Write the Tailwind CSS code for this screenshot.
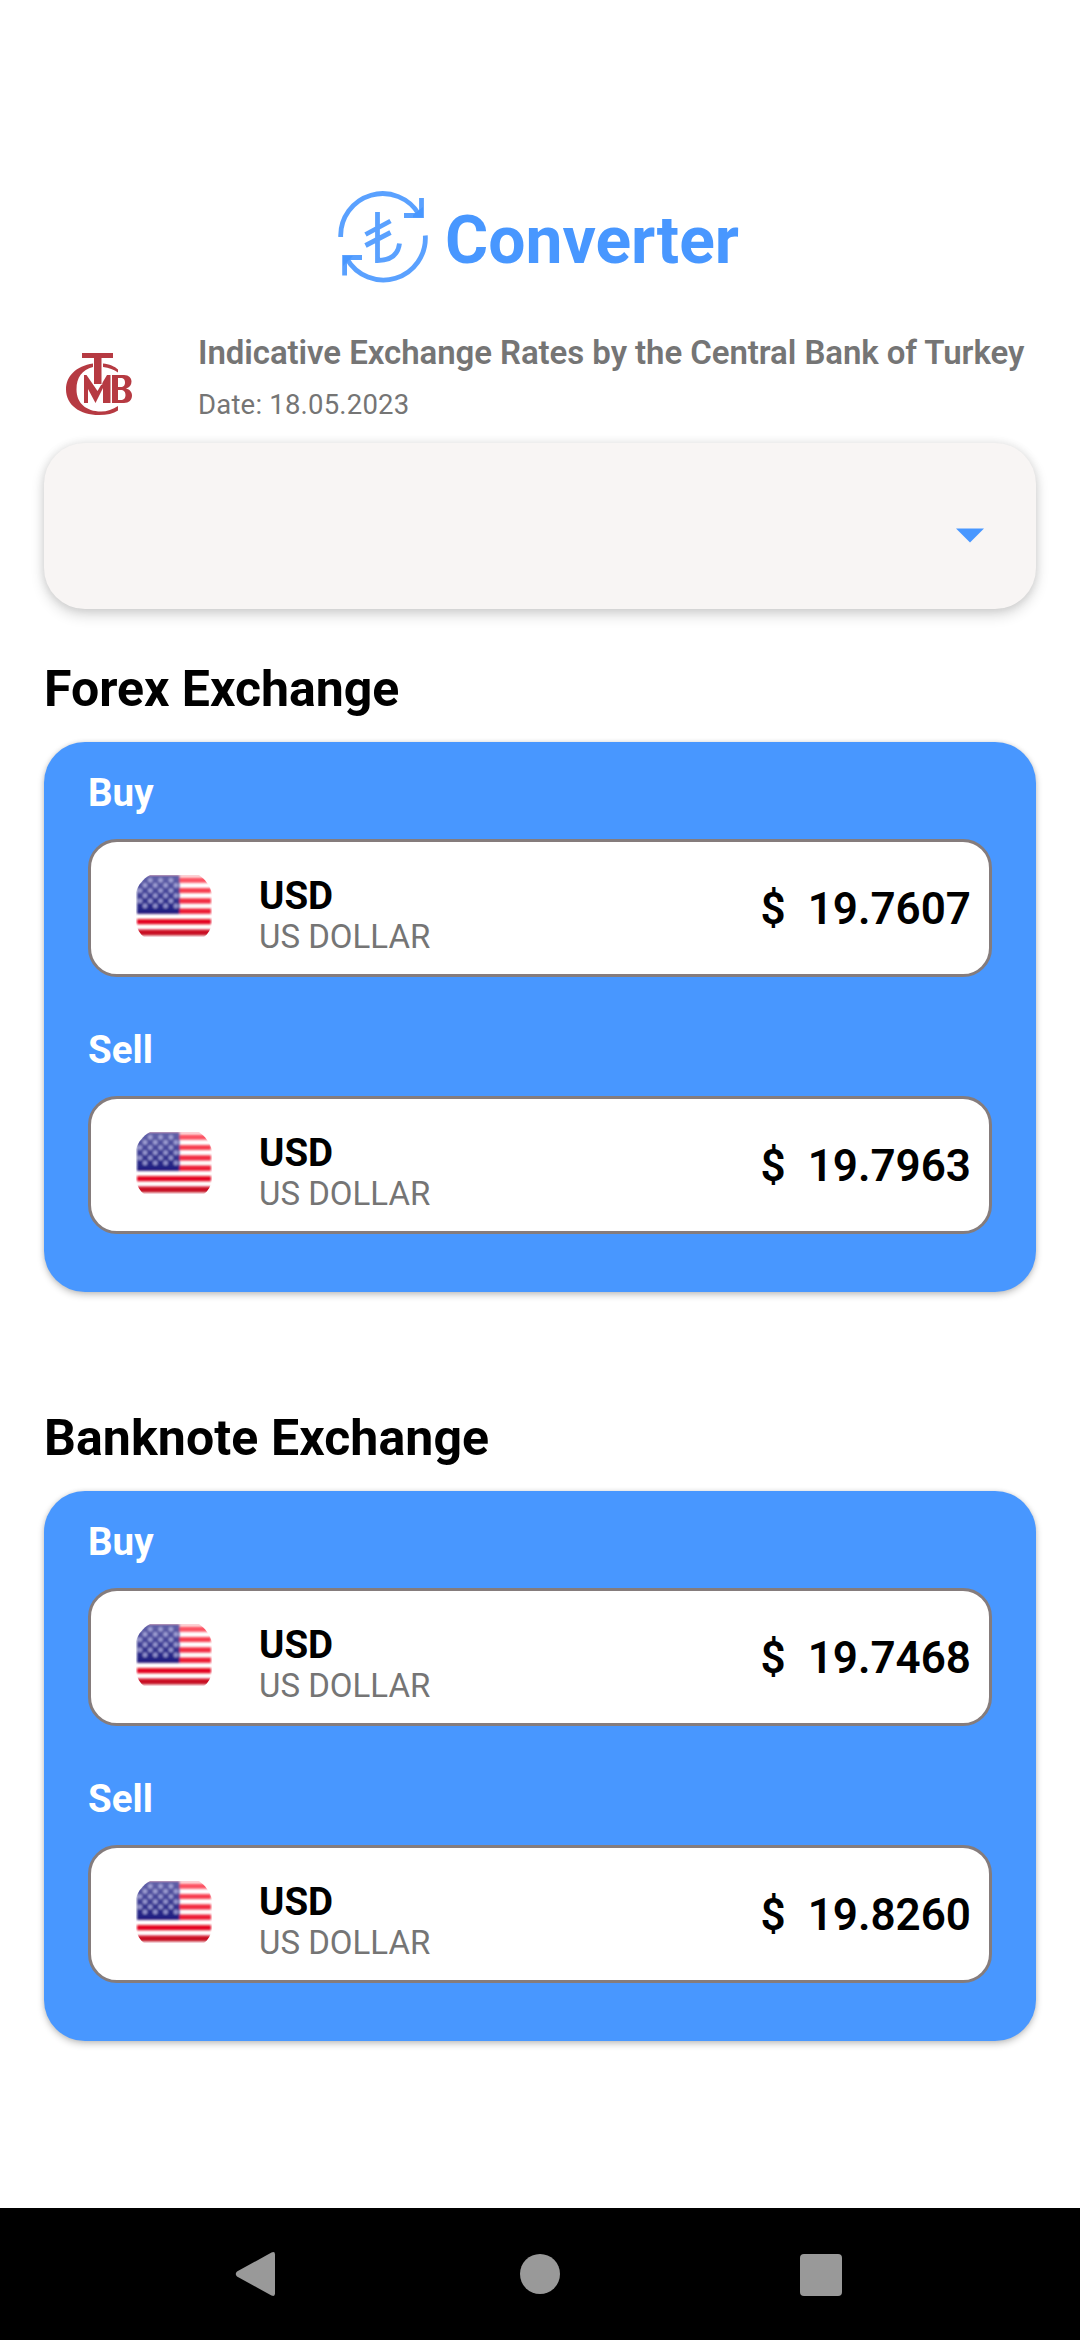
<!DOCTYPE html>
<html lang="en">
<head>
<meta charset="utf-8">
<title>Converter</title>
<script src="https://cdn.jsdelivr.net/npm/@tailwindcss/browser@4"></script>
</head>
<body class="flex h-[2340px] w-[1080px] flex-col overflow-hidden bg-white font-['Roboto',sans-serif] text-black">

<svg width="0" height="0" class="absolute">
  <defs>
    <linearGradient id="canton" x1="0" y1="0" x2="0" y2="1"><stop offset="0" stop-color="#6464aa"/><stop offset="1" stop-color="#1b1b80"/></linearGradient>
    <linearGradient id="stripes" gradientUnits="userSpaceOnUse" x1="0" y1="0" x2="0" y2="62"><stop offset="0" stop-color="#ff5a68"/><stop offset=".6" stop-color="#ec1730"/><stop offset=".8" stop-color="#e2001c"/><stop offset="1" stop-color="#bb1024"/></linearGradient>
    <filter id="soft" x="-5%" y="-5%" width="110%" height="110%"><feGaussianBlur stdDeviation="1.2"/></filter>
    <clipPath id="flagShape"><path d="M14 0H63C69 4 74 11 76 18V48C75 54 72 59 68 62H8C4 59 1 54 0 48V17C2 10 7 4 14 0Z"/></clipPath>
    <symbol id="flag" viewBox="0 0 76 62">
      <g clip-path="url(#flagShape)">
        <rect width="76" height="62" fill="#fff"/>
        <g filter="url(#soft)">
          <path fill="url(#stripes)" d="M1 2.600H75V7.800H1ZM1 13H75V18H1ZM1 23.300H75V28.500H1ZM1 33.600H75V38.800H1ZM1 44H75V49.200H1ZM1 54.600H75V60.500H1Z"/>
          <path fill="#f9b9bf" d="M1 -1H75V1H1Z"/>
          <rect x="1" y="0" width="42.500" height="38.800" fill="url(#canton)"/>
          <g fill="none" stroke="#c8c8ee" stroke-opacity=".66" stroke-width="4.800" stroke-linecap="round" stroke-dasharray="0 10.300">
            <path d="M4 5.300H43M4 15.600H43M4 25.900H43"/>
            <path d="M9 10.400H43M9 20.700H43M9 31H43"/>
          </g>
        </g>
      </g>
    </symbol>
  </defs>
</svg>

<header class="flex items-start pt-[190px] pl-[336px]">
  <svg class="h-[94px] w-[94px]" viewBox="0 0 94 94" fill="none" stroke="#4897ff" stroke-opacity=".9" stroke-width="4.800">
    <path d="M4.700 47A42 42 0 0 1 83 24.500"/><path d="M68 25.500H85.500V8"/>
    <path d="M89.300 45.500A42 42 0 0 1 11 69"/><path d="M26 67.500H8.600V85.500"/>
    <path d="M41.500 22V70.500C54 70.500 62 65 63.500 53.500M29.500 44.500 54.500 31M29.500 55.500 54.500 42.500"/>
    <path fill="#4897ff" stroke="none" d="M77 25 87 17V27.500H77ZM7 76V66H17Z"/>
  </svg>
  <h1 class="mt-3 ml-[15px] text-[66px] leading-[78px] font-bold text-[#4897ff]">Converter</h1>
</header>

<section class="mt-[49px] flex h-[110px] items-start pl-[66px]">
  <svg class="mt-5 h-[63px] w-[67px]" viewBox="0 0 67 63" fill="#b63a42">
    <path d="M27 10.500C10 13 0 23 0 36.500 0 52 14 62 33 62 41 62 47.500 60.500 52 57.500V53C47 56.500 41 58.500 35 58.500 20 58.500 10.500 50 10.500 36.500 10.500 24 16 17 27 14ZM37 10.500C43 11 49 13.500 52 16.500V19.500C48 16.500 43 15 37 14Z"/>
    <path d="M18 50V22H20.500L31.500 38 41 22H44.500V50H37V35L29.500 50 22 36V50Z"/>
    <path fill-rule="evenodd" d="M46 22H58C63 22 65.500 25 65.500 28.500 65.500 32 63.500 34.500 60 35.500 64 36.500 66 39.500 66 42.500 66 47 63 50 58 50H46ZM52 25V34H54.500C58 34 59 32 59 29.500 59 27 58 25 54.500 25ZM52 37V47H54.500C58 47 59.500 45 59.500 42 59.500 39 58 37 54.500 37Z"/>
    <path stroke="#fff" stroke-width="1.500" paint-order="stroke" d="M16 0H47V5H35.500V31H28V5H16Z"/>
  </svg>
  <div class="ml-[65px] text-[#757575]">
    <p class="text-[33px] leading-[39px] font-[640] tracking-[-0.07px]">Indicative Exchange Rates by the Central Bank of Turkey</p>
    <p class="mt-[17px] text-[27.5px] leading-8 tracking-[0.2px]">Date: 18.05.2023</p>
  </div>
</section>

<div class="mx-11 flex h-[166px] items-start justify-end rounded-[41px] bg-[#f8f5f4] pt-[85px] pr-[52px] shadow-[0_6px_14px_rgba(0,0,0,0.16),0_0_10px_rgba(0,0,0,0.10)]">
  <svg class="h-[15px] w-7" viewBox="0 0 28 15"><path fill="#4897ff" d="M0 0.500H28L14 14.500Z"/></svg>
</div>

<main class="mt-[50px] flex flex-1 flex-col gap-[116px] px-11">
  <section>
    <h2 class="text-[50px] leading-[60px] font-[660]">Forex Exchange</h2>
    <div class="mt-[23px] h-[550px] rounded-[41px] bg-[#4897ff] px-11 pt-7 shadow-[0_3px_7px_rgba(0,0,0,0.22),0_0_4px_rgba(0,0,0,0.10)]">
      <h3 class="text-[38.5px] leading-[46px] font-bold text-white">Buy</h3>
      <div class="mt-[23px] flex h-[138px] items-start rounded-[29px] border-3 border-[#857c7c] bg-white pr-[18px] pl-[45px]">
        <svg class="mt-[33px] h-[62px] w-[76px]"><use href="#flag"/></svg>
        <div class="mt-[31px] ml-[47px] flex-1">
          <p class="text-[38.5px] leading-[46px] font-[660]">USD</p>
          <p class="-mt-[2px] text-[33px] leading-10 text-[#757575]">US DOLLAR</p>
        </div>
        <p class="mt-[41px] flex gap-[22px] text-[44px] leading-[52px] font-[640]"><span>$</span><span>19.7607</span></p>
      </div>
      <h3 class="mt-[50px] text-[38.5px] leading-[46px] font-bold text-white">Sell</h3>
      <div class="mt-[23px] flex h-[138px] items-start rounded-[29px] border-3 border-[#857c7c] bg-white pr-[18px] pl-[45px]">
        <svg class="mt-[33px] h-[62px] w-[76px]"><use href="#flag"/></svg>
        <div class="mt-[31px] ml-[47px] flex-1">
          <p class="text-[38.5px] leading-[46px] font-[660]">USD</p>
          <p class="-mt-[2px] text-[33px] leading-10 text-[#757575]">US DOLLAR</p>
        </div>
        <p class="mt-[41px] flex gap-[22px] text-[44px] leading-[52px] font-[640]"><span>$</span><span>19.7963</span></p>
      </div>
    </div>
  </section>

  <section>
    <h2 class="text-[50px] leading-[60px] font-[660] tracking-[0.1px]">Banknote Exchange</h2>
    <div class="mt-[23px] h-[550px] rounded-[41px] bg-[#4897ff] px-11 pt-7 shadow-[0_3px_7px_rgba(0,0,0,0.22),0_0_4px_rgba(0,0,0,0.10)]">
      <h3 class="text-[38.5px] leading-[46px] font-bold text-white">Buy</h3>
      <div class="mt-[23px] flex h-[138px] items-start rounded-[29px] border-3 border-[#857c7c] bg-white pr-[18px] pl-[45px]">
        <svg class="mt-[33px] h-[62px] w-[76px]"><use href="#flag"/></svg>
        <div class="mt-[31px] ml-[47px] flex-1">
          <p class="text-[38.5px] leading-[46px] font-[660]">USD</p>
          <p class="-mt-[2px] text-[33px] leading-10 text-[#757575]">US DOLLAR</p>
        </div>
        <p class="mt-[41px] flex gap-[22px] text-[44px] leading-[52px] font-[640]"><span>$</span><span>19.7468</span></p>
      </div>
      <h3 class="mt-[50px] text-[38.5px] leading-[46px] font-bold text-white">Sell</h3>
      <div class="mt-[23px] flex h-[138px] items-start rounded-[29px] border-3 border-[#857c7c] bg-white pr-[18px] pl-[45px]">
        <svg class="mt-[33px] h-[62px] w-[76px]"><use href="#flag"/></svg>
        <div class="mt-[31px] ml-[47px] flex-1">
          <p class="text-[38.5px] leading-[46px] font-[660]">USD</p>
          <p class="-mt-[2px] text-[33px] leading-10 text-[#757575]">US DOLLAR</p>
        </div>
        <p class="mt-[41px] flex gap-[22px] text-[44px] leading-[52px] font-[640]"><span>$</span><span>19.8260</span></p>
      </div>
    </div>
  </section>
</main>

<nav class="flex h-[132px] items-center bg-black pl-[235px]">
  <svg class="h-[46px] w-[41px]" viewBox="0 0 41 46" fill="#999"><path d="M2 20.500 36.500 1.500Q40 0 40 3.500V42.500Q40 46 36.500 44.500L2 25.500Q-.5 23 2 20.500Z"/></svg>
  <div class="ml-[244px] h-10 w-10 rounded-full bg-[#999]"></div>
  <div class="mt-px ml-[240px] h-[42px] w-[42px] rounded-[4px] bg-[#999]"></div>
</nav>
</body>
</html>
